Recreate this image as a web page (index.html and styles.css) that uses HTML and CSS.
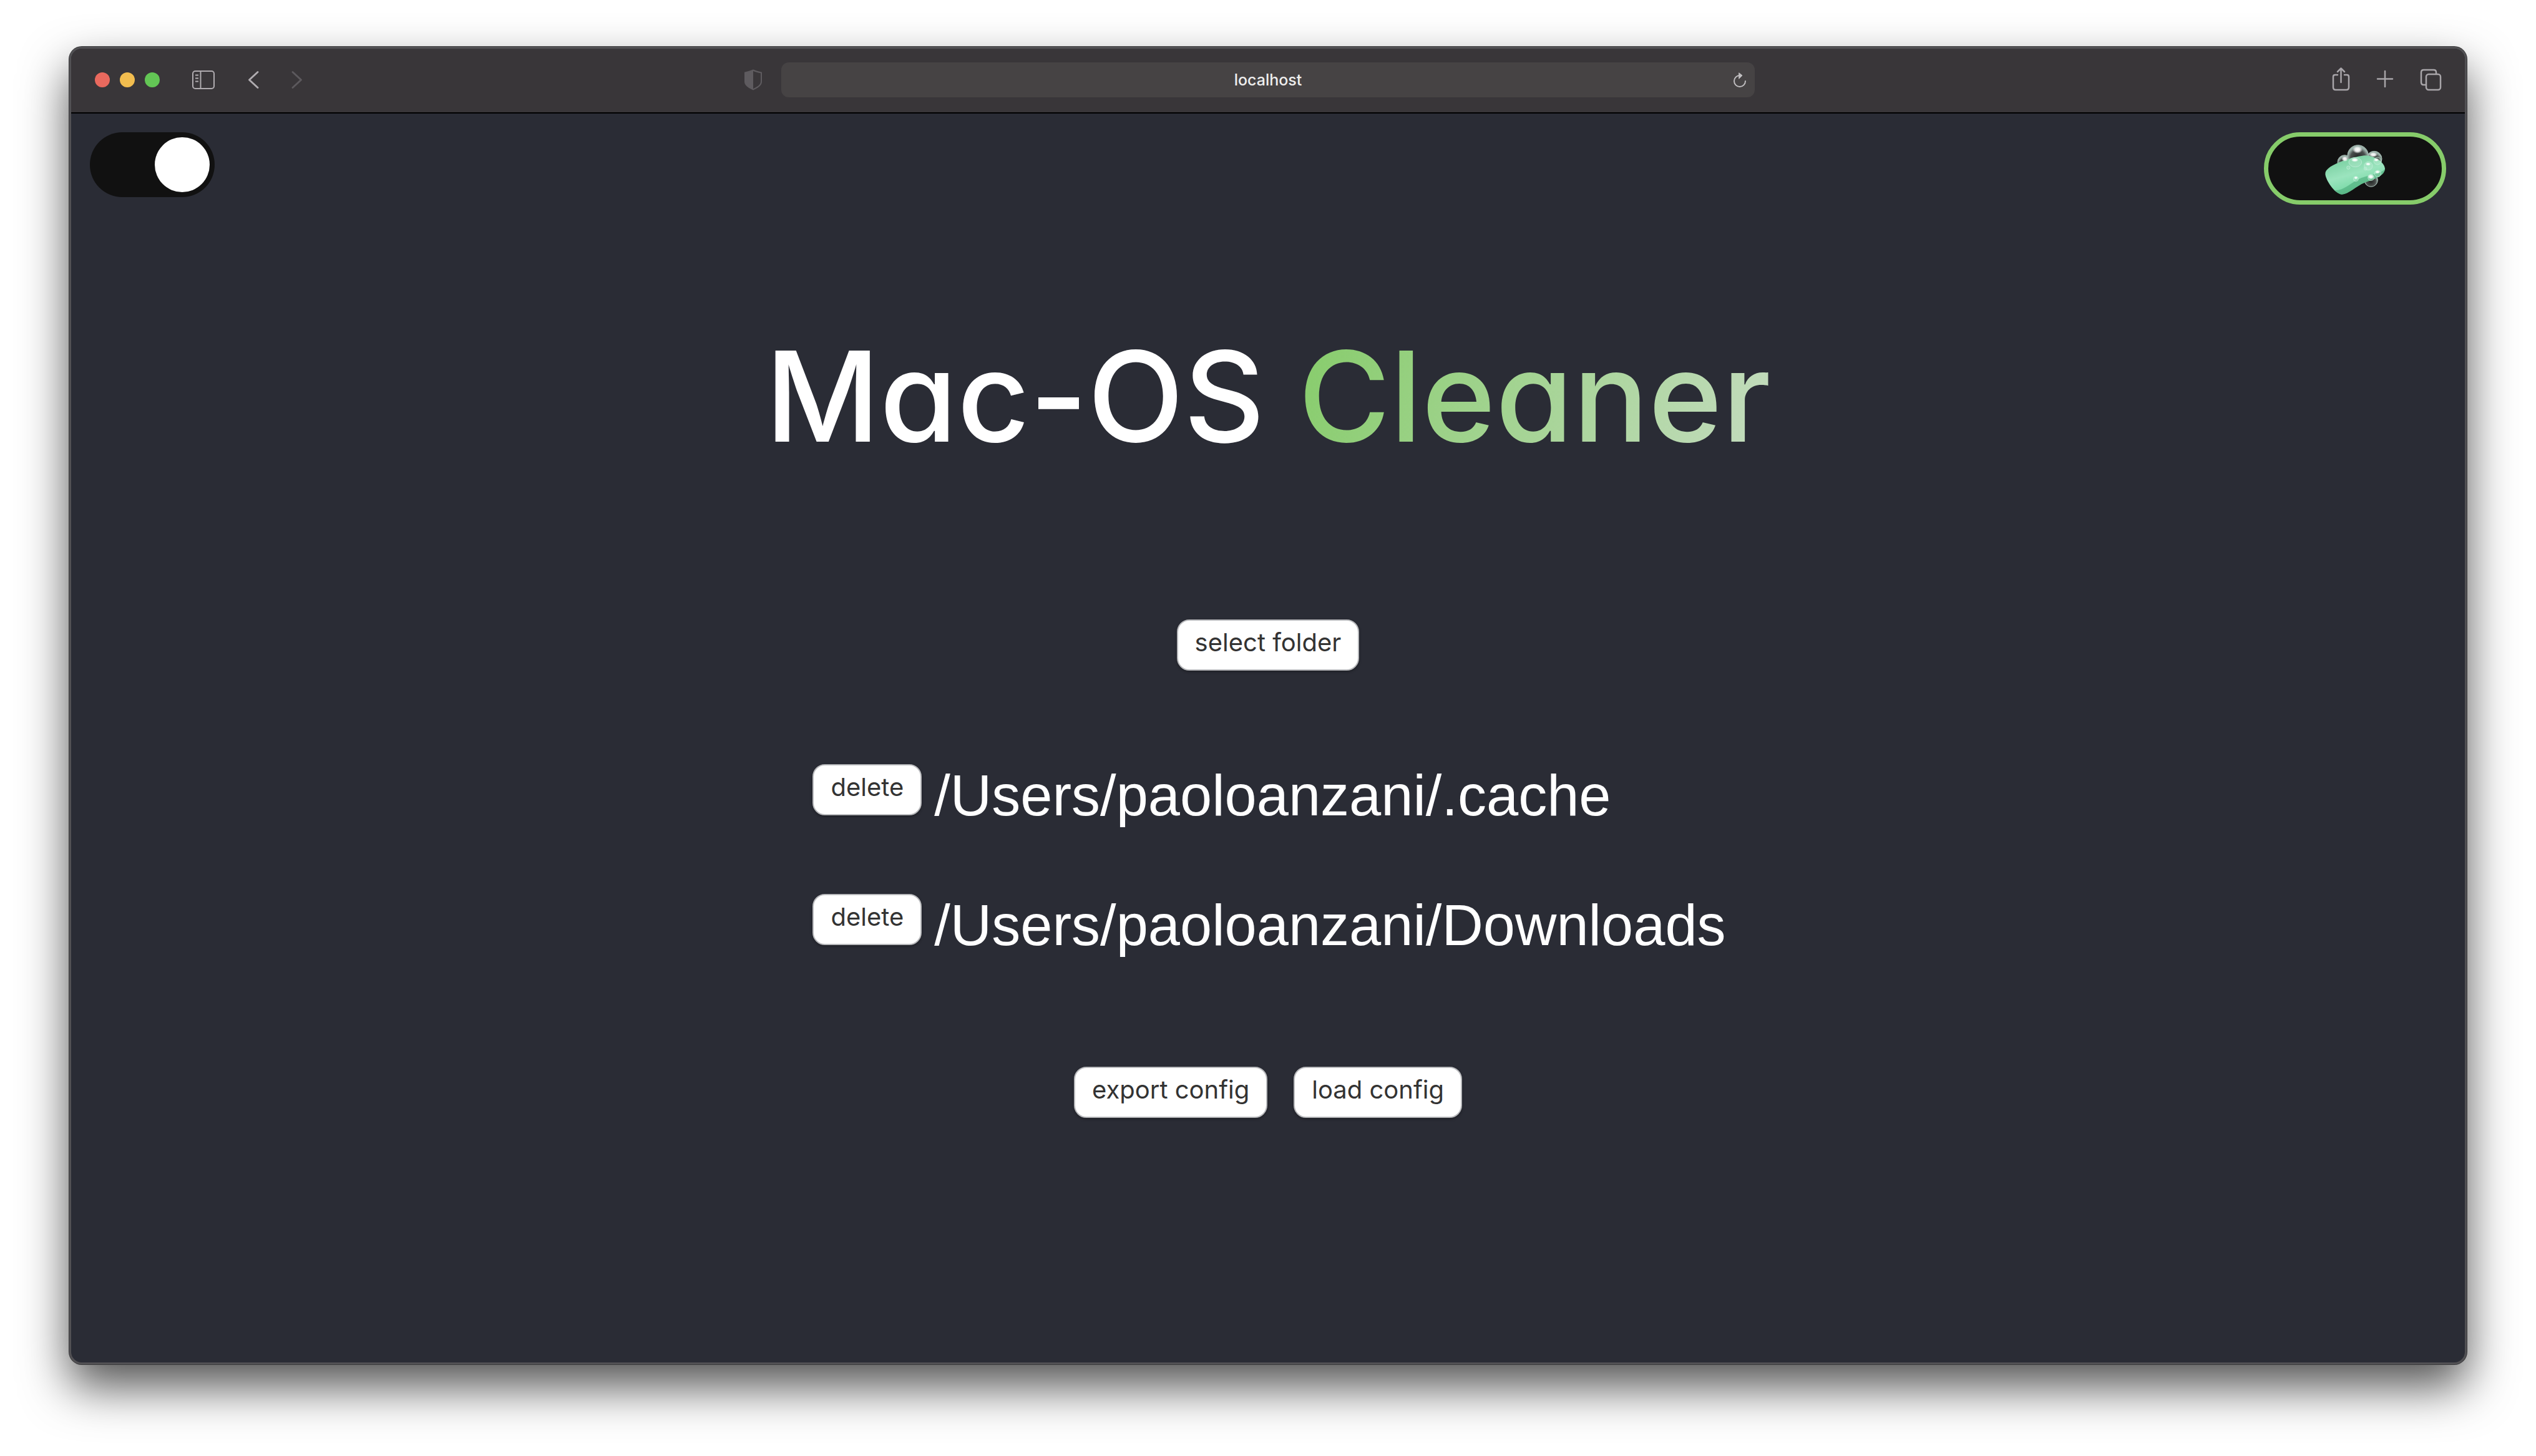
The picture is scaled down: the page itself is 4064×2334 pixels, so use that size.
FILE: index.html
```html
<!DOCTYPE html>
<html lang="en">
<head>
<meta charset="utf-8">
<title>Mac-OS Cleaner</title>
<link rel="stylesheet" href="styles.css">
</head>
<body>
<div class="window">
  <div class="toolbar">
    <div class="toolbar-start">
      <div class="lights">
        <span class="light light-close"></span>
        <span class="light light-minimize"></span>
        <span class="light light-zoom"></span>
      </div>
      <button class="tool tool-sidebar" type="button" aria-label="Show sidebar">
        <svg width="36" height="36" viewBox="0 0 36 36" fill="none" stroke="#b0acb0" stroke-width="2"><rect x="1" y="4" width="34" height="28" rx="4"/><path d="M13.500 4V32"/><path d="M5 10.500h5M5 15.500h5M5 20.500h5"/></svg>
      </button>
      <div class="history">
        <button class="tool" type="button" aria-label="Back">
          <svg width="36" height="36" viewBox="0 0 36 36" fill="none" stroke="#b0acb0" stroke-width="3" stroke-linecap="round" stroke-linejoin="round"><path d="M25 5.500 11.500 18 25 30.500"/></svg>
        </button>
        <button class="tool" type="button" aria-label="Forward">
          <svg width="36" height="36" viewBox="0 0 36 36" fill="none" stroke="#5c595d" stroke-width="3" stroke-linecap="round" stroke-linejoin="round"><path d="M11 5.500 24.500 18 11 30.500"/></svg>
        </button>
      </div>
      <button class="tool tool-privacy" type="button" aria-label="Privacy report">
        <svg width="30" height="36" viewBox="0 0 30 36"><path d="M15 2.500 C19 4.500 23 5.500 28 6.500 V21 C28 27 21 30 15 33.500 C9 30 2 27 2 21 V6.500 C7 5.500 11 4.500 15 2.500Z" fill="none" stroke="#5e5b5f" stroke-width="2"/><path d="M15 2.500 C11 4.500 7 5.500 2 6.500 V21 C2 27 9 30 15 33.500Z" fill="#5e5b5f"/></svg>
      </button>
    </div>
    <form class="address">
      <input class="address-input" type="text" value="localhost" aria-label="Address">
      <button class="reload" type="button" aria-label="Reload">
        <svg width="24" height="28" viewBox="0 0 24 28" fill="none" stroke="#c0bec0" stroke-width="2" stroke-linecap="round"><path d="M12 7 A9 9 0 1 0 21 16"/><path d="M11 3 L16 7 L11 12Z" fill="#c0bec0" stroke-width="1"/></svg>
      </button>
    </form>
    <div class="toolbar-end">
      <button class="tool" type="button" aria-label="Share">
        <svg width="36" height="40" viewBox="0 0 36 40" fill="none" stroke="#a8a5a9" stroke-width="2.500" stroke-linecap="round" stroke-linejoin="round"><path d="M12 12H8q-3 0-3 3V32q0 4 4 4H26q4 0 4-4V15q0-3-3-3H23"/><path d="M17.500 24V2M12 7l5.500-5.500L23 7"/></svg>
      </button>
      <button class="tool" type="button" aria-label="New tab">
        <svg width="36" height="36" viewBox="0 0 36 36" fill="none" stroke="#a8a5a9" stroke-width="2.500" stroke-linecap="round"><path d="M16 4V29M4 16.500H28"/></svg>
      </button>
      <button class="tool" type="button" aria-label="Show tabs">
        <svg width="36" height="36" viewBox="0 0 36 36" fill="none" stroke="#a8a5a9" stroke-width="2.500" stroke-linejoin="round"><rect x="10" y="9" width="23" height="25" rx="4"/><path d="M26 8.500V6q0-4-4-4H6q-4 0-4 4V22q0 4 4 4h3.500"/></svg>
      </button>
    </div>
  </div>

  <div class="page">
    <header class="page-header">
      <input class="switch" type="checkbox" role="switch" aria-label="Dark mode" checked>
      <button class="clean" type="button" aria-label="Clean">
        <svg width="116" height="96" viewBox="0 0 348 288">
          <defs>
            <linearGradient id="soap" x1="0.200" y1="0.100" x2="0.600" y2="1">
              <stop offset="0" stop-color="#79cfa0"/><stop offset="0.450" stop-color="#9be4be"/><stop offset="0.750" stop-color="#7fdbab"/><stop offset="1" stop-color="#5bb586"/>
            </linearGradient>
            <radialGradient id="bubble" cx="0.500" cy="0.600" r="0.500">
              <stop offset="0" stop-color="#222423"/><stop offset="0.700" stop-color="#4a4f4d"/><stop offset="1" stop-color="#9ab0a8"/>
            </radialGradient>
            <radialGradient id="glint"><stop offset="0" stop-color="#fff"/><stop offset="0.500" stop-color="#fff" stop-opacity="0.850"/><stop offset="1" stop-color="#fff" stop-opacity="0"/></radialGradient>
          </defs>
          <g fill="url(#bubble)" stroke="#a3b8b0" stroke-width="3">
            <circle cx="124" cy="108" r="34"/>
            <circle cx="266" cy="92" r="37"/>
            <circle cx="251" cy="194" r="32"/>
            <circle cx="188" cy="76" r="50"/>
          </g>
          <path d="M36 148 C62 112 168 82 218 76 C264 74 316 106 318 140 C314 176 262 190 220 206 C180 222 142 262 110 263 C76 260 34 196 31 166 Q31 154 36 148Z" fill="url(#soap)"/>
          <path d="M318 140 C314 176 262 190 220 206 C180 222 142 262 110 263 C98 262 86 254 76 244 C126 244 152 206 204 184 C244 168 296 166 318 140Z" fill="#4fae7d" fill-opacity="0.650"/>
          <g fill="#d8f5e6" fill-opacity="0.200" stroke="#c5eedb" stroke-opacity="0.700" stroke-width="3">
            <ellipse cx="175" cy="108" rx="31" ry="23"/>
            <circle cx="238" cy="126" r="20"/>
            <circle cx="282" cy="102" r="18"/>
            <circle cx="283" cy="163" r="16"/>
            <circle cx="251" cy="182" r="15"/>
            <circle cx="178" cy="188" r="12"/>
            <circle cx="142" cy="134" r="8"/>
            <circle cx="224" cy="139" r="7"/>
          </g>
          <g fill="url(#glint)">
            <ellipse cx="186" cy="48" rx="24" ry="18"/>
            <ellipse cx="262" cy="72" rx="20" ry="12"/>
            <ellipse cx="125" cy="92" rx="16" ry="13"/>
            <ellipse cx="173" cy="97" rx="18" ry="10"/>
            <ellipse cx="237" cy="117" rx="13" ry="8"/>
            <ellipse cx="276" cy="97" rx="12" ry="8"/>
            <ellipse cx="282" cy="155" rx="12" ry="8"/>
            <ellipse cx="250" cy="178" rx="16" ry="12"/>
            <ellipse cx="178" cy="183" rx="9" ry="7"/>
          </g>
        </svg>
      </button>
    </header>

    <main class="content">
      <h1 class="title">Mac-OS <span class="title-accent">Cleaner</span></h1>
      <button class="button" type="button">select folder</button>
      <ul class="folders">
        <li class="folder"><button class="button" type="button">delete</button><span class="path">/Users/paoloanzani/.cache</span></li>
        <li class="folder"><button class="button" type="button">delete</button><span class="path">/Users/paoloanzani/Downloads</span></li>
      </ul>
      <div class="actions">
        <button class="button" type="button">export config</button>
        <button class="button" type="button">load config</button>
      </div>
    </main>
  </div>
</div>
</body>
</html>
```
FILE: styles.css
```css
* {
  box-sizing: border-box;
}

body {
  display: flex;
  min-height: 100vh;
  margin: 0;
  padding: 75px 111px 147px;
  background: #fff;
  color: #fff;
  font-family: Inter, "Liberation Sans", sans-serif;
}

button,
input {
  font-family: inherit;
}

.window {
  display: flex;
  flex: 1;
  flex-direction: column;
  overflow: hidden;
  border: 3px solid #525154;
  border-radius: 20px;
  background: #2a2c35;
  box-shadow: 0 0 0 1px #39393b, 0 36px 76px rgba(0, 0, 0, 0.68);
}

/* Browser toolbar */

.toolbar {
  display: grid;
  grid-template-columns: 1fr minmax(0, 1560px) 1fr;
  align-items: center;
  height: 104px;
  padding-bottom: 2px;
  border-bottom: 2px solid #000;
  background: #393639;
}

.toolbar-start,
.toolbar-end,
.lights,
.history {
  display: flex;
  align-items: center;
}

.toolbar-start {
  padding: 0 30px 0 38px;
}

.toolbar-end {
  justify-content: flex-end;
  gap: 36px;
  padding-right: 36px;
}

.lights {
  gap: 16px;
}

.light {
  width: 24px;
  height: 24px;
  border-radius: 50%;
}

.light-close {
  background: #e9695e;
}

.light-minimize {
  background: #f2bd4f;
}

.light-zoom {
  background: #63c655;
}

.tool,
.reload {
  display: flex;
  padding: 0;
  border: 0;
  background: none;
}

.tool-sidebar {
  margin-left: 52px;
}

.history {
  gap: 34px;
  margin-left: 44px;
}

.tool-privacy {
  margin-left: auto;
}

.address {
  display: flex;
  align-items: center;
  height: 56px;
  padding: 0 12px 0 36px;
  border-radius: 12px;
  background: #464344;
}

.address-input {
  flex: 1;
  min-width: 0;
  padding: 0;
  border: 0;
  background: none;
  color: #eee;
  font-size: 25px;
  font-weight: 500;
  line-height: 32px;
  text-align: center;
}

/* Page */

.page {
  flex: 1;
  padding: 30px;
}

.page-header {
  display: flex;
  align-items: flex-start;
  justify-content: space-between;
}

.switch {
  display: flex;
  justify-content: flex-start;
  width: 200px;
  height: 104px;
  margin: 0;
  padding: 8px;
  border-radius: 52px;
  background: #111;
  appearance: none;
}

.switch::before {
  width: 88px;
  height: 88px;
  border-radius: 50%;
  background: #fff;
  content: "";
}

.switch:checked {
  justify-content: flex-end;
}

.clean {
  display: flex;
  align-items: center;
  justify-content: center;
  width: 292px;
  height: 116px;
  padding: 4px 0 0;
  border: 7px solid #86cc6a;
  border-radius: 58px;
  background: #111;
}

.content {
  display: flex;
  flex-direction: column;
  align-items: center;
}

.title {
  margin: 187px 0 238px;
  font-feature-settings: "cv11";
  font-size: 201px;
  font-weight: 500;
  line-height: 240px;
}

.title-accent {
  background: linear-gradient(110deg, #86cc6a, #c5dcc0);
  background-clip: text;
  color: transparent;
}

.button {
  height: 82px;
  padding: 0 27px 8px;
  border: 2px solid #b9babd;
  border-radius: 20px;
  background: #fff;
  box-shadow: 0 2px 4px rgba(0, 0, 0, 0.3);
  color: #333;
  font-size: 40px;
  line-height: 48px;
}

.folders {
  display: flex;
  flex-direction: column;
  gap: 108px;
  margin: 150px 0 177px;
  padding: 0 0 0 4px;
  list-style: none;
}

.folder {
  display: flex;
  align-items: flex-start;
  gap: 20px;
}

.path {
  font-family: "Liberation Sans", Arial, sans-serif;
  font-size: 92px;
  line-height: 100px;
}

.actions {
  display: flex;
  gap: 42px;
}
```
